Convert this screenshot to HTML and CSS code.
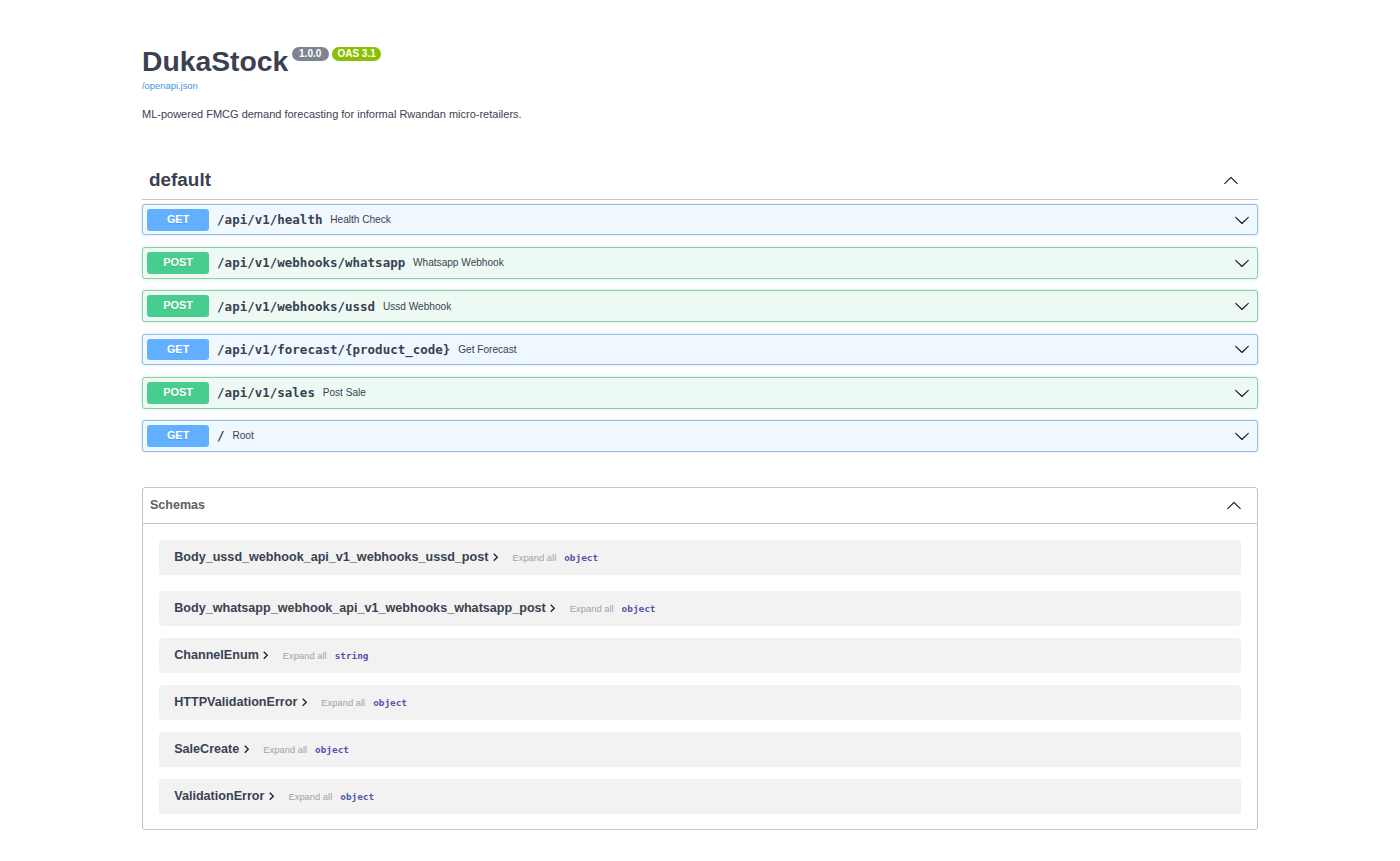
FILE: index.html
```html
<!DOCTYPE html>
<html lang="en">
<head>
<meta charset="utf-8">
<title>DukaStock - Swagger UI</title>
<link rel="stylesheet" href="styles.css">
</head>
<body>
<div class="wrapper">
  <section class="info">
    <div class="title-row">
      <h2 class="title">DukaStock</h2>
      <span class="badge badge-version">1.0.0</span>
      <span class="badge badge-oas">OAS 3.1</span>
    </div>
    <a class="spec-link" href="#">/openapi.json</a>
    <p class="description">ML-powered FMCG demand forecasting for informal Rwandan micro-retailers.</p>
  </section>

  <section class="tag">
    <h3 class="tag-header">
      <span>default</span>
      <svg class="arrow" viewBox="0 0 20 20"><path d="M17.418 14.908c.272.268.709.268.979 0 .27-.268.271-.701 0-.969l-7.908-7.83c-.27-.268-.707-.268-.979 0l-7.908 7.83c-.27.268-.27.701 0 .969.271.268.709.268.979 0L10 7.767l7.418 7.141z"/></svg>
    </h3>
    <div class="ops">
      <div class="op op-get">
        <span class="method">GET</span>
        <span class="path">/api/v1/health</span>
        <span class="summary">Health Check</span>
        <svg class="arrow" viewBox="0 0 20 20"><path d="M17.418 6.109c.272-.268.709-.268.979 0s.271.701 0 .969l-7.908 7.83c-.27.268-.707.268-.979 0l-7.908-7.83c-.27-.268-.27-.701 0-.969.271-.268.709-.268.979 0L10 13.25l7.418-7.141z"/></svg>
      </div>
      <div class="op op-post">
        <span class="method">POST</span>
        <span class="path">/api/v1/webhooks/whatsapp</span>
        <span class="summary">Whatsapp Webhook</span>
        <svg class="arrow" viewBox="0 0 20 20"><path d="M17.418 6.109c.272-.268.709-.268.979 0s.271.701 0 .969l-7.908 7.83c-.27.268-.707.268-.979 0l-7.908-7.83c-.27-.268-.27-.701 0-.969.271-.268.709-.268.979 0L10 13.25l7.418-7.141z"/></svg>
      </div>
      <div class="op op-post">
        <span class="method">POST</span>
        <span class="path">/api/v1/webhooks/ussd</span>
        <span class="summary">Ussd Webhook</span>
        <svg class="arrow" viewBox="0 0 20 20"><path d="M17.418 6.109c.272-.268.709-.268.979 0s.271.701 0 .969l-7.908 7.83c-.27.268-.707.268-.979 0l-7.908-7.83c-.27-.268-.27-.701 0-.969.271-.268.709-.268.979 0L10 13.25l7.418-7.141z"/></svg>
      </div>
      <div class="op op-get">
        <span class="method">GET</span>
        <span class="path">/api/v1/forecast/{product_code}</span>
        <span class="summary">Get Forecast</span>
        <svg class="arrow" viewBox="0 0 20 20"><path d="M17.418 6.109c.272-.268.709-.268.979 0s.271.701 0 .969l-7.908 7.83c-.27.268-.707.268-.979 0l-7.908-7.83c-.27-.268-.27-.701 0-.969.271-.268.709-.268.979 0L10 13.25l7.418-7.141z"/></svg>
      </div>
      <div class="op op-post">
        <span class="method">POST</span>
        <span class="path">/api/v1/sales</span>
        <span class="summary">Post Sale</span>
        <svg class="arrow" viewBox="0 0 20 20"><path d="M17.418 6.109c.272-.268.709-.268.979 0s.271.701 0 .969l-7.908 7.83c-.27.268-.707.268-.979 0l-7.908-7.83c-.27-.268-.27-.701 0-.969.271-.268.709-.268.979 0L10 13.25l7.418-7.141z"/></svg>
      </div>
      <div class="op op-get">
        <span class="method">GET</span>
        <span class="path">/</span>
        <span class="summary">Root</span>
        <svg class="arrow" viewBox="0 0 20 20"><path d="M17.418 6.109c.272-.268.709-.268.979 0s.271.701 0 .969l-7.908 7.83c-.27.268-.707.268-.979 0l-7.908-7.83c-.27-.268-.27-.701 0-.969.271-.268.709-.268.979 0L10 13.25l7.418-7.141z"/></svg>
      </div>
    </div>
  </section>

  <section class="models">
    <h4 class="models-header">
      <span>Schemas</span>
      <svg class="arrow" viewBox="0 0 20 20"><path d="M17.418 14.908c.272.268.709.268.979 0 .27-.268.271-.701 0-.969l-7.908-7.83c-.27-.268-.707-.268-.979 0l-7.908 7.83c-.27.268-.27.701 0 .969.271.268.709.268.979 0L10 7.767l7.418 7.141z"/></svg>
    </h4>
    <div class="models-body">
      <div class="model">
        <span class="model-name">Body_ussd_webhook_api_v1_webhooks_ussd_post</span>
        <svg class="toggle" viewBox="8.2 5.6 8.2 13"><path d="M10 6L8.59 7.41 13.17 12l-4.58 4.59L10 18l6-6z"/></svg>
        <span class="expand">Expand all</span>
        <span class="type">object</span>
      </div>
      <div class="model">
        <span class="model-name">Body_whatsapp_webhook_api_v1_webhooks_whatsapp_post</span>
        <svg class="toggle" viewBox="8.2 5.6 8.2 13"><path d="M10 6L8.59 7.41 13.17 12l-4.58 4.59L10 18l6-6z"/></svg>
        <span class="expand">Expand all</span>
        <span class="type">object</span>
      </div>
      <div class="model">
        <span class="model-name">ChannelEnum</span>
        <svg class="toggle" viewBox="8.2 5.6 8.2 13"><path d="M10 6L8.59 7.41 13.17 12l-4.58 4.59L10 18l6-6z"/></svg>
        <span class="expand">Expand all</span>
        <span class="type">string</span>
      </div>
      <div class="model">
        <span class="model-name">HTTPValidationError</span>
        <svg class="toggle" viewBox="8.2 5.6 8.2 13"><path d="M10 6L8.59 7.41 13.17 12l-4.58 4.59L10 18l6-6z"/></svg>
        <span class="expand">Expand all</span>
        <span class="type">object</span>
      </div>
      <div class="model">
        <span class="model-name">SaleCreate</span>
        <svg class="toggle" viewBox="8.2 5.6 8.2 13"><path d="M10 6L8.59 7.41 13.17 12l-4.58 4.59L10 18l6-6z"/></svg>
        <span class="expand">Expand all</span>
        <span class="type">object</span>
      </div>
      <div class="model">
        <span class="model-name">ValidationError</span>
        <svg class="toggle" viewBox="8.2 5.6 8.2 13"><path d="M10 6L8.59 7.41 13.17 12l-4.58 4.59L10 18l6-6z"/></svg>
        <span class="expand">Expand all</span>
        <span class="type">object</span>
      </div>
    </div>
  </section>
</div>
</body>
</html>
```

FILE: styles.css
```css
* { box-sizing: content-box; }

body {
  margin: 0;
  background: #fff;
  color: #3b4151;
  font-family: "Liberation Sans", Arial, sans-serif;
}

.wrapper {
  width: 1116px;
  margin: 0 auto;
  padding-top: 44.2px;
}

/* Info */
.title-row {
  display: flex;
  align-items: flex-start;
}

.title {
  margin: 0;
  font-size: 28.3px;
  line-height: 34px;
  font-weight: 700;
  color: #3b4151;
}

.badge {
  margin-top: 2.5px;
  margin-left: 3.4px;
  padding: 2px 7.4px;
  border-radius: 40px;
  font-size: 10px;
  line-height: 10.3px;
  font-weight: 700;
  color: #fff;
}

.badge-version { background: #7d8492; }
.badge-oas { background: #89bf04; padding: 2px 5.3px; }

.spec-link {
  display: block;
  margin-top: 1.8px;
  font-size: 9.4px;
  line-height: 12px;
  color: #4990e2;
  text-decoration: none;
}

.description {
  margin: 15px 0 0;
  font-size: 11px;
  line-height: 15px;
  color: #3b4151;
}

/* Operations */
.tag { margin-top: 38.8px; }

.tag-header {
  display: flex;
  align-items: center;
  justify-content: space-between;
  margin: 0;
  padding: 7.8px 19px 7.8px 7px;
  border-bottom: 1px solid rgba(59, 65, 81, 0.3);
  font-size: 18.9px;
  line-height: 22.6px;
  font-weight: 700;
  color: #3b4151;
}

.arrow {
  width: 16px;
  height: 16px;
  fill: #1f1f1f;
  flex: none;
}

.ops {
  display: flex;
  flex-direction: column;
  gap: 11.7px;
  margin-top: 3.9px;
}

.op {
  display: flex;
  align-items: center;
  padding: 3.9px;
  border: 1px solid;
  border-radius: 3px;
  box-shadow: 0 0 3px rgba(0, 0, 0, 0.15);
}

.op-get { background: #eff7ff; border-color: #8dc0ef; }
.op-post { background: #edfaf4; border-color: #82d2ad; }

.method {
  width: 62.4px;
  height: 21.8px;
  line-height: 21.8px;
  text-align: center;
  border-radius: 3px;
  color: #fff;
  font-size: 10.9px;
  font-weight: 700;
  text-shadow: 0 1px 0 rgba(0, 0, 0, 0.1);
  flex: none;
}

.op-get .method { background: #61affe; }
.op-post .method { background: #49cc90; }

.path {
  padding: 0 7.8px;
  font-family: "DejaVu Sans Mono", "Liberation Mono", monospace;
  font-size: 12.5px;
  font-weight: 700;
  color: #3b4151;
}

.summary {
  flex: 1;
  font-size: 10.1px;
  color: #3b4151;
}

.op .arrow { margin-right: 3px; }

/* Schemas */
.models {
  margin-top: 35px;
  border: 1px solid rgba(59, 65, 81, 0.3);
  border-radius: 3px;
}

.models-header {
  display: flex;
  align-items: center;
  justify-content: space-between;
  height: 35px;
  margin: 0;
  padding: 0 15px 0 7px;
  border-bottom: 1px solid rgba(59, 65, 81, 0.3);
  font-size: 12.5px;
  font-weight: 700;
  color: #606060;
}

.models-body {
  display: flex;
  flex-direction: column;
  gap: 12px;
  padding: 16px 15.6px 15.6px;
}

.model {
  display: flex;
  align-items: center;
  height: 35px;
  padding: 0 15.6px;
  border-radius: 3px;
  background: rgba(0, 0, 0, 0.05);
}

.model:first-child { margin-bottom: 4px; }

.model-name {
  font-size: 12.6px;
  font-weight: 700;
  color: #3b4151;
}

.toggle {
  width: 5.5px;
  height: 8.7px;
  margin-left: 4.5px;
  fill: #222;
  flex: none;
}

.expand {
  margin-left: 14px;
  font-size: 9.4px;
  color: #a3a3a3;
}

.type {
  margin-left: 8px;
  font-family: "DejaVu Sans Mono", "Liberation Mono", monospace;
  font-size: 9.4px;
  font-weight: 700;
  color: #55a;
}
```
